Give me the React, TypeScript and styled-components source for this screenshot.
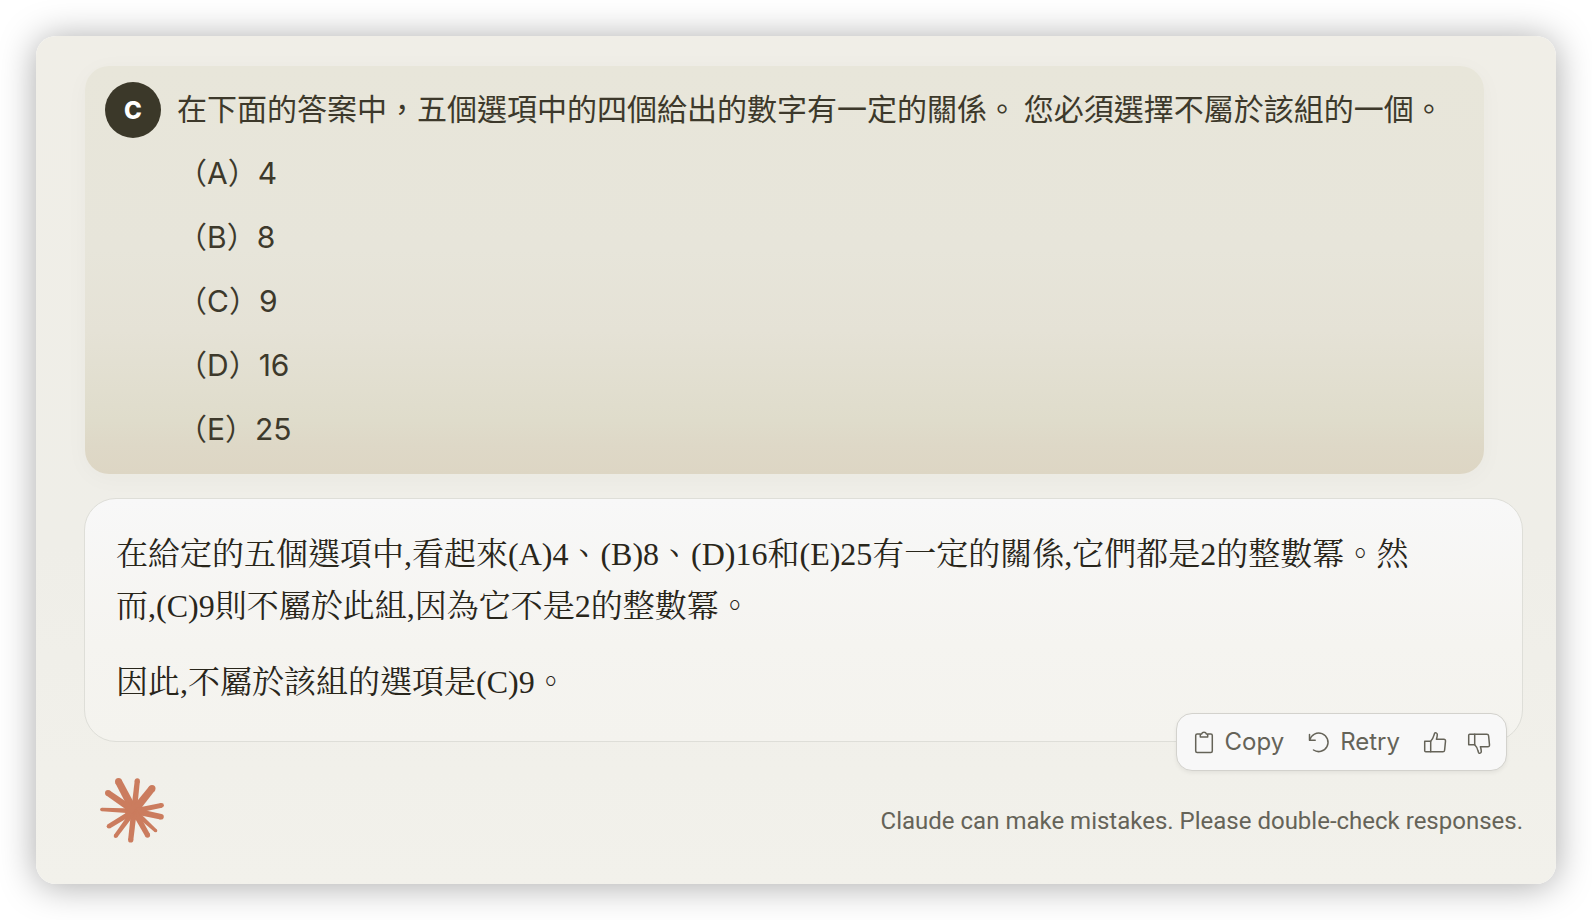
import React from 'react';
import styled, { createGlobalStyle } from 'styled-components';

const sans = `Inter, 'Noto Sans CJK TC', sans-serif`;
const serif = `'Liberation Serif', 'Noto Serif CJK TC', 'Noto Sans CJK TC', serif`;

const GlobalStyle = createGlobalStyle`
  * { box-sizing: border-box; }
  body { margin: 0; background: #fff; }
`;

const Page = styled.div`
  min-height: 100vh;
  padding: 36px;
  font-family: ${sans};
`;

const ChatWindow = styled.main`
  display: flex;
  flex-direction: column;
  padding: 30px 33px 41px 48px;
  border-radius: 20px;
  background: linear-gradient(#f0eee7, #efeee8 60%, #f2f1eb);
  box-shadow: 0 2px 36px rgba(0, 0, 0, 0.34);
`;

const UserMessage = styled.section`
  display: flex;
  gap: 16px;
  margin: 0 39px 24px 1px;
  padding: 13px 16px 15px 20px;
  border-radius: 24px;
  color: #3d392b;
  background: linear-gradient(#e8e6da, #e7e5da 45%, #e5e2d6 65%, #dfdccb 87%, #ded8c7 93%, #ddd6c4);
  box-shadow: 0 4px 24px rgba(61, 57, 41, 0.03);
`;

const Avatar = styled.div`
  display: flex;
  flex: none;
  align-items: center;
  justify-content: center;
  width: 56px;
  height: 56px;
  margin-top: 3px;
  border-radius: 50%;
  color: #fff;
  background: #3b3829;
  font-size: 24px;
  font-weight: 800;
`;

const Question = styled.p`
  margin: 0 0 4px;
  font-family: 'Noto Sans CJK TC', sans-serif;
  font-size: 30px;
  line-height: 56px;
`;

const Options = styled.ul`
  margin: 0;
  padding: 0;
  list-style: none;
`;

const Option = styled.li`
  height: 64px;
  font-family: 'Noto Sans CJK TC', sans-serif;
  font-size: 30px;
  line-height: 64px;
`;

const Latin = styled.span`
  font-family: Inter, sans-serif;
`;

const Answer = styled.section`
  position: relative;
  display: flex;
  flex-direction: column;
  gap: 24px;
  padding: 29px 103px 33px 31px;
  border: 1px solid #deded8;
  border-radius: 32px;
  color: #29261b;
  background: linear-gradient(#f8f8f8, #f5f4f0 60%, #f4f3ee);
`;

const Paragraph = styled.p`
  margin: 0;
  font-family: ${serif};
  font-size: 32px;
  line-height: 52px;
`;

const Actions = styled.div`
  position: absolute;
  right: 15px;
  bottom: -30px;
  display: flex;
  align-items: center;
  gap: 22px;
  height: 58px;
  padding: 0 14px;
  border: 1px solid #d3d2cd;
  border-radius: 16px;
  background: #f8f8f8;
  box-shadow: 0 2px 4px rgba(0, 0, 0, 0.06);
`;

const Ratings = styled.div`
  display: flex;
  gap: 18px;
`;

const ActionButton = styled.button`
  display: flex;
  align-items: center;
  gap: 8px;
  padding: 0;
  border: 0;
  color: #656358;
  background: none;
  font-family: Inter, sans-serif;
  font-size: 24px;
  line-height: 32px;
`;

const Footer = styled.footer`
  display: flex;
  align-items: flex-end;
  justify-content: space-between;
  margin-top: 36px;
  padding-left: 16px;
`;

const Note = styled.p`
  margin: 0;
  color: #656358;
  font-family: Roboto, sans-serif;
  font-size: 24px;
  line-height: 44px;
`;

const Icon = ({ children }: { children: React.ReactNode }) => (
  <svg
    width="26"
    height="26"
    viewBox="0 0 26 26"
    fill="none"
    stroke="currentColor"
    strokeWidth="1.5"
    strokeLinecap="round"
    strokeLinejoin="round"
    aria-hidden="true"
  >
    {children}
  </svg>
);

const thumb = (
  <>
    <path d="M2.7 12.2h6v10.6H3.7a1 1 0 0 1-1-1Z" />
    <path d="M8.700 12.2c1.400-1.300 2.500-3.300 3.200-5.800l.600-1.900c.600-1.300 2.800-.7 2.800 1.100 0 1.700-.400 3.200-.900 4.700h7.500c1 0 1.700.8 1.600 1.800l-.900 9.100c-.1.900-.8 1.600-1.700 1.600H8.700" />
  </>
);

// Each ray: tip x, tip y, half width at the tip.
const rays = [
  [18.5, 3.5, 3.5],
  [37.3, 2.9, 2.6],
  [52, 10.5, 3.5],
  [61.5, 27.3, 2.4],
  [61, 38.7, 2.8],
  [55.7, 52.7, 1.6],
  [47.5, 57.1, 2.6],
  [30.7, 62, 2.6],
  [15.7, 58, 2],
  [9, 48.3, 2.3],
  [1.9, 31.5, 1.8],
  [8, 15, 3],
];

const Starburst = () => (
  <svg width="64" height="65" viewBox="0 0 64 65" fill="#cb7c5e" aria-hidden="true">
    <circle cx="34" cy="33" r="9" />
    {rays.map(([x, y, r]) => {
      const dx = x - 34;
      const dy = y - 33;
      const length = Math.hypot(dx, dy);
      const nx = -dy / length;
      const ny = dx / length;
      const base = Math.max(r * 1.1, 2.6);
      return (
        <React.Fragment key={`${x}-${y}`}>
          <circle cx={x} cy={y} r={r} />
          <path
            d={`M${x + nx * r} ${y + ny * r}L${34 + nx * base} ${33 + ny * base}L${34 - nx * base} ${33 - ny * base}L${x - nx * r} ${y - ny * r}Z`}
          />
        </React.Fragment>
      );
    })}
  </svg>
);

const options = [
  ['A', '4'],
  ['B', '8'],
  ['C', '9'],
  ['D', '16'],
  ['E', '25'],
];

export default function App() {
  return (
    <Page lang="zh-TW">
      <GlobalStyle />
      <ChatWindow>
        <UserMessage>
          <Avatar>C</Avatar>
          <div>
            <Question>
              在下面的答案中，五個選項中的四個給出的數字有一定的關係。 您必須選擇不屬於該組的一個。
            </Question>
            <Options>
              {options.map(([letter, value]) => (
                <Option key={letter}>
                  （<Latin>{letter}</Latin>）<Latin>{value}</Latin>
                </Option>
              ))}
            </Options>
          </div>
        </UserMessage>

        <Answer>
          <Paragraph>
            在給定的五個選項中,看起來(A)4、(B)8、(D)16和(E)25有一定的關係,它們都是2的整數冪。然而,(C)9則不屬於此組,因為它不是2的整數冪。
          </Paragraph>
          <Paragraph>因此,不屬於該組的選項是(C)9。</Paragraph>
          <Actions>
            <ActionButton type="button">
              <Icon>
                <path d="M9 5H6.200a1.500 1.500 0 0 0-1.500 1.500v15.500a1.500 1.500 0 0 0 1.500 1.500h13.600a1.500 1.500 0 0 0 1.500-1.500V6.500a1.500 1.500 0 0 0-1.500-1.500H17" />
                <path d="M9.300 8V5.800c0-.5.300-.8.800-.8h.5a2.500 2.500 0 0 1 4.800 0h.5c.5 0 .8.300.8.800V8Z" />
              </Icon>
              Copy
            </ActionButton>
            <ActionButton type="button">
              <Icon>
                <path d="M3.500 5.500v5.700h5.700" />
                <path d="M3.700 11A9.300 9.300 0 1 1 7.500 21" />
              </Icon>
              Retry
            </ActionButton>
            <Ratings>
              <ActionButton type="button" aria-label="Good response">
                <Icon>{thumb}</Icon>
              </ActionButton>
              <ActionButton type="button" aria-label="Bad response">
                <Icon>
                  <g transform="matrix(1 0 0 -1 0 28)">{thumb}</g>
                </Icon>
              </ActionButton>
            </Ratings>
          </Actions>
        </Answer>

        <Footer>
          <Starburst />
          <Note>Claude can make mistakes. Please double-check responses.</Note>
        </Footer>
      </ChatWindow>
    </Page>
  );
}
